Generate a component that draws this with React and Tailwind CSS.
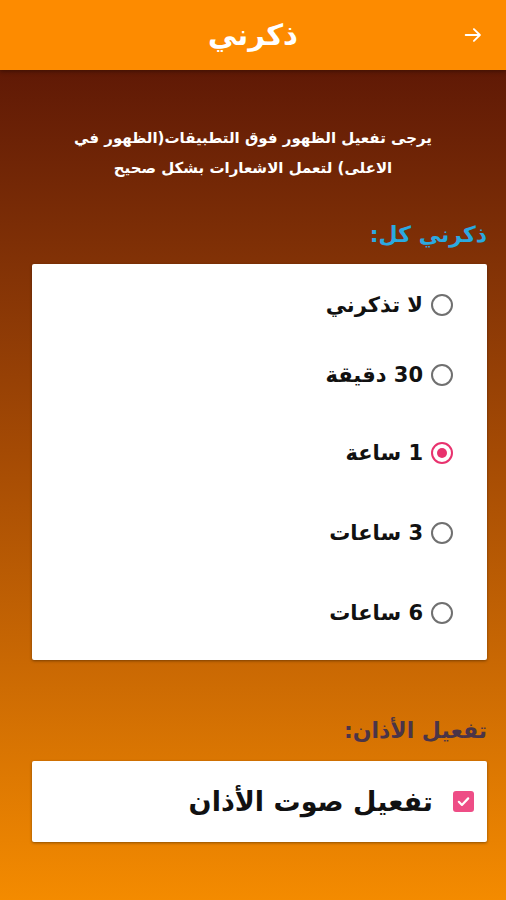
import { useState } from 'react'

const INTERVALS = [
  { key: 'off', label: 'لا تذكرني' },
  { key: '30m', label: '30 دقيقة' },
  { key: '1h', label: '1 ساعة' },
  { key: '3h', label: '3 ساعات' },
  { key: '6h', label: '6 ساعات' },
]

// spacing above each row, rows aren't evenly spaced
const ROW_GAP = ['', 'mt-[32px]', 'mt-[40px]', 'mt-[42px]', 'mt-[42px]']

function Radio({ checked }) {
  return (
    <span
      className={
        'flex h-[22px] w-[22px] shrink-0 items-center justify-center rounded-full border-2 ' +
        (checked ? 'border-[#e8326e]' : 'border-[#707070]')
      }
    >
      {checked && <span className="h-[10px] w-[10px] rounded-full bg-[#e8326e]" />}
    </span>
  )
}

export default function App() {
  const [interval, setInterval] = useState('1h')
  const [adhan, setAdhan] = useState(true)

  return (
    <div
      dir="rtl"
      className="flex h-[900px] w-[506px] flex-col overflow-hidden bg-gradient-to-b from-[#541005] via-[#a44a04] to-[#f48b00] font-['DejaVu_Sans',sans-serif]"
    >
      {/* app bar */}
      <header className="relative flex h-[70px] shrink-0 items-center justify-center bg-[#fd8b00] shadow-[0_2px_4px_rgba(0,0,0,0.3)]">
        <h1 className="text-[29px] font-bold leading-none text-white">ذكرني</h1>
        <button className="absolute right-[22px] top-[24px] text-white">
          <svg width="22" height="22" viewBox="0 0 24 24" fill="none" stroke="currentColor" strokeWidth="2" strokeLinecap="round" strokeLinejoin="round">
            <path d="M4 12h15" />
            <path d="M13 5.5l6.5 6.5-6.5 6.5" />
          </svg>
        </button>
      </header>

      <p className="mx-auto mt-[53px] w-[400px] text-center text-[15px] font-bold leading-[30px] text-white">
        يرجى تفعيل الظهور فوق التطبيقات(الظهور في الاعلى) لتعمل الاشعارات بشكل صحيح
      </p>

      <div className="px-[19px]">
        <h2 className="mt-[37px] text-[22px] font-bold leading-[30px] text-[#2aa9e0]">ذكرني كل:</h2>

        <div className="ml-[13px] mt-[14px] flex h-[396px] flex-col rounded-[2px] bg-white pt-[22px] shadow-[0_1px_3px_rgba(0,0,0,0.4)]">
          {INTERVALS.map((it, i) => (
            <label
              key={it.key}
              onClick={() => setInterval(it.key)}
              className={'flex cursor-pointer items-center gap-[8px] pr-[34px] ' + ROW_GAP[i]}
            >
              <Radio checked={interval === it.key} />
              <span className="text-[21px] font-bold leading-[38px] text-[#111]">{it.label}</span>
            </label>
          ))}
        </div>

        <h2 className="mt-[56px] text-[22px] font-bold leading-[30px] text-[#4a3448]">تفعيل الأذان:</h2>

        <div
          onClick={() => setAdhan(!adhan)}
          className="ml-[13px] mt-[15px] flex h-[81px] cursor-pointer items-center gap-[20px] rounded-[2px] bg-white pr-[13px] shadow-[0_1px_3px_rgba(0,0,0,0.4)]"
        >
          <span
            className={
              'flex h-[21px] w-[21px] items-center justify-center rounded-[3px] ' +
              (adhan ? 'bg-[#ee4d86]' : 'border-2 border-[#6b6b6b]')
            }
          >
            {adhan && (
              <svg width="15" height="15" viewBox="0 0 24 24" fill="none" stroke="white" strokeWidth="3.5" strokeLinecap="round" strokeLinejoin="round">
                <path d="M4.5 12.5l5 5L19.5 7" />
              </svg>
            )}
          </span>
          <span className="text-[27px] font-bold leading-none text-[#111]">تفعيل صوت الأذان</span>
        </div>
      </div>
    </div>
  )
}
